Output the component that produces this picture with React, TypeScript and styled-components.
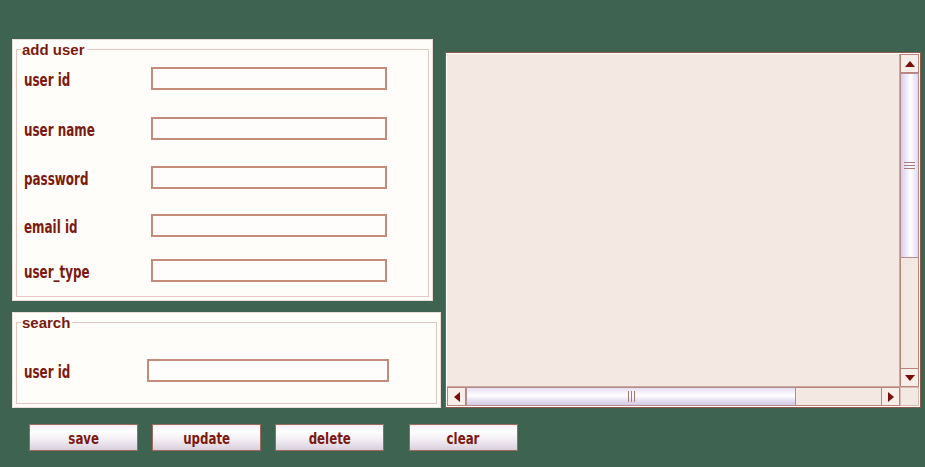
import React from "react";
import styled, { createGlobalStyle } from "styled-components";

const GlobalStyle = createGlobalStyle`
  html, body {
    margin: 0;
    padding: 0;
    background: #3e6350;
  }
  * { box-sizing: border-box; }
`;

const INK = "#7a1a10";
const NARROW = `"Liberation Sans Narrow", "DejaVu Sans Condensed", "Liberation Sans", sans-serif`;

const Page = styled.div`
  width: 925px;
  height: 467px;
  padding: 39px 0 0 12px;
  background: #3e6350;
  overflow: hidden;
`;

const Main = styled.div`
  display: flex;
  align-items: flex-start;
  gap: 4px;
`;

const LeftColumn = styled.div`
  display: flex;
  flex-direction: column;
  align-items: flex-start;
  gap: 11px;
`;

const Panel = styled.div<{ $w: number; $h: number }>`
  width: ${(p) => p.$w}px;
  height: ${(p) => p.$h}px;
  background: #fffdfa;
  border: 1px solid #eadcd6;
  padding: 0 3px 3px 3px;
`;

const Group = styled.fieldset<{ $top: number }>`
  margin: 0;
  height: 100%;
  border: 1px solid #e3c7c0;
  padding: ${(p) => p.$top}px 6px 0 7px;
  min-width: 0;
`;

const Legend = styled.legend`
  font-family: "Liberation Sans", Arial, sans-serif;
  font-weight: bold;
  font-size: 15px;
  line-height: 19px;
  color: ${INK};
  padding: 0 2px 0 1px;
  margin-left: -3px;
`;

const Row = styled.div<{ $gap?: number }>`
  display: flex;
  align-items: center;
  margin-top: ${(p) => p.$gap ?? 0}px;
`;

const Label = styled.label<{ $w: number }>`
  width: ${(p) => p.$w}px;
  flex: none;
  padding-top: 4px;
`;

const NarrowText = styled.span`
  display: inline-block;
  font-family: ${NARROW};
  font-weight: bold;
  font-size: 17px;
  line-height: 19px;
  color: ${INK};
  white-space: pre;
  transform: scaleX(0.78);
  transform-origin: left center;
`;

const CenteredNarrowText = styled(NarrowText)`
  font-size: 16px;
  transform: scaleX(0.82);
  transform-origin: center center;
`;

const TextInput = styled.input<{ $w: number }>`
  width: ${(p) => p.$w}px;
  height: 23px;
  border: 2px solid #c48a7c;
  background: #fffdfb;
  padding: 0 4px;
  margin: 0;
  outline: none;
`;

const ListBox = styled.div`
  margin-top: 13px;
  width: 476px;
  height: 356px;
  border: 1px solid #8d5a4e;
  padding: 1px;
  background: #ffffff;
  display: grid;
  grid-template-columns: 1fr 19px;
  grid-template-rows: 1fr 19px;
`;

const ListContent = styled.div`
  background: #f3e8e2;
  border-right: 1px solid #c9a89e;
  border-bottom: 1px solid #c9a89e;
`;

const VScroll = styled.div`
  display: flex;
  flex-direction: column;
  background: #f3e8e2;
`;

const HScroll = styled.div`
  display: flex;
  flex-direction: row;
  background: #f3e8e2;
`;

const Corner = styled.div`
  background: #f3e8e2;
  border: 1px solid #d8bcb4;
`;

const ArrowButton = styled.div`
  width: 19px;
  height: 19px;
  flex: none;
  display: flex;
  align-items: center;
  justify-content: center;
  background: #f7eeea;
  border: 1px solid #b98579;
`;

const VThumb = styled.div<{ $h: number }>`
  height: ${(p) => p.$h}px;
  flex: none;
  border: 1px solid #b48c8c;
  background: linear-gradient(90deg, #d8cdea 0%, #f4f0fb 40%, #ffffff 55%, #e3daf0 100%);
  display: flex;
  align-items: center;
  justify-content: center;
`;

const HThumb = styled.div<{ $w: number }>`
  width: ${(p) => p.$w}px;
  flex: none;
  border: 1px solid #b48c8c;
  background: linear-gradient(180deg, #e6def3 0%, #ffffff 45%, #e9e2f3 70%, #d4cae4 100%);
  display: flex;
  align-items: center;
  justify-content: center;
`;

const VTrack = styled.div`
  flex: 1;
  border-left: 1px solid #b98579;
  border-right: 1px solid #b98579;
`;

const HTrack = styled.div`
  flex: 1;
  border-top: 1px solid #b98579;
  border-bottom: 1px solid #b98579;
`;

const ButtonBar = styled.div`
  display: flex;
  gap: 14px;
  margin-top: 16px;
  padding-left: 17px;
`;

const ActionButton = styled.button<{ $extra?: number }>`
  width: 109px;
  height: 27px;
  margin: 0 0 0 ${(p) => p.$extra ?? 0}px;
  padding: 1px 0 0 0;
  border: 1px solid #9e6a5c;
  background: linear-gradient(180deg, #f4eef4 0%, #ffffff 25%, #f2edf3 60%, #d9cfdb 100%);
  display: flex;
  align-items: center;
  justify-content: center;
  cursor: pointer;
`;

const Tri = ({ dir }: { dir: "up" | "down" | "left" | "right" }) => {
  const pts =
    dir === "up"
      ? "0,6 5,0 10,6"
      : dir === "down"
      ? "0,0 10,0 5,6"
      : dir === "left"
      ? "6,0 6,10 0,5"
      : "0,0 6,5 0,10";
  const w = dir === "up" || dir === "down" ? 10 : 6;
  const h = dir === "up" || dir === "down" ? 6 : 10;
  return (
    <svg width={w} height={h} viewBox={`0 0 ${w} ${h}`}>
      <polygon points={pts} fill="#7a0c0c" />
    </svg>
  );
};

const VGrip = () => (
  <svg width="11" height="7" viewBox="0 0 11 7">
    <path d="M0 0.5H11M0 3.5H11M0 6.5H11" stroke="#a87a76" strokeWidth="1" />
  </svg>
);

const HGrip = () => (
  <svg width="7" height="11" viewBox="0 0 7 11">
    <path d="M0.5 0V11M3.5 0V11M6.5 0V11" stroke="#a87a76" strokeWidth="1" />
  </svg>
);

const addUserRows: { label: string; gap: number }[] = [
  { label: "user id", gap: 0 },
  { label: "user name", gap: 27 },
  { label: "password", gap: 26 },
  { label: "email id", gap: 25 },
  { label: "user_type", gap: 22 },
];

const actions: { label: string; extra?: number }[] = [
  { label: "save" },
  { label: "update" },
  { label: "delete" },
  { label: "clear", extra: 11 },
];

export default function App() {
  return (
    <Page>
      <GlobalStyle />
      <Main>
        <LeftColumn>
          <Panel $w={421} $h={262}>
            <Group $top={8}>
              <Legend>add user</Legend>
              {addUserRows.map((r) => (
                <Row key={r.label} $gap={r.gap}>
                  <Label $w={127}>
                    <NarrowText>{r.label}</NarrowText>
                  </Label>
                  <TextInput $w={236} type={r.label === "password" ? "password" : "text"} />
                </Row>
              ))}
            </Group>
          </Panel>
          <Panel $w={429} $h={96}>
            <Group $top={27}>
              <Legend>search</Legend>
              <Row>
                <Label $w={123}>
                  <NarrowText>user id</NarrowText>
                </Label>
                <TextInput $w={242} type="text" />
              </Row>
            </Group>
          </Panel>
        </LeftColumn>
        <ListBox>
          <ListContent />
          <VScroll>
            <ArrowButton>
              <Tri dir="up" />
            </ArrowButton>
            <VThumb $h={185}>
              <VGrip />
            </VThumb>
            <VTrack />
            <ArrowButton>
              <Tri dir="down" />
            </ArrowButton>
          </VScroll>
          <HScroll>
            <ArrowButton>
              <Tri dir="left" />
            </ArrowButton>
            <HThumb $w={330}>
              <HGrip />
            </HThumb>
            <HTrack />
            <ArrowButton>
              <Tri dir="right" />
            </ArrowButton>
          </HScroll>
          <Corner />
        </ListBox>
      </Main>
      <ButtonBar>
        {actions.map((a) => (
          <ActionButton key={a.label} $extra={a.extra}>
            <CenteredNarrowText>{a.label}</CenteredNarrowText>
          </ActionButton>
        ))}
      </ButtonBar>
    </Page>
  );
}
